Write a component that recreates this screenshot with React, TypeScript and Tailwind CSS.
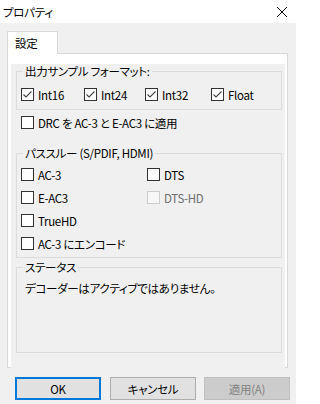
import React from 'react';

function CheckBox({ checked = false, disabled = false }: { checked?: boolean; disabled?: boolean }) {
  return (
    <span
      className={
        disabled
          ? 'flex h-[13px] w-[13px] shrink-0 items-center justify-center border border-[#cccccc] bg-[#f7f7f7]'
          : 'flex h-[13px] w-[13px] shrink-0 items-center justify-center border border-[#333333] bg-white'
      }
    >
      {checked && (
        <svg width="11" height="11" viewBox="0 0 11 11" fill="none">
          <polyline points="1.5,5.5 4,8 9.5,2.5" stroke="#444444" strokeWidth="1.1" />
        </svg>
      )}
    </span>
  );
}

function Check({
  label,
  checked = false,
  disabled = false,
  className = '',
}: {
  label: string;
  checked?: boolean;
  disabled?: boolean;
  className?: string;
}) {
  return (
    <div className={`flex h-[13px] items-center gap-[4px] ${className}`}>
      <CheckBox checked={checked} disabled={disabled} />
      <span className={disabled ? 'whitespace-nowrap text-[#6d6d6d]' : 'whitespace-nowrap'}>{label}</span>
    </div>
  );
}

export default function App() {
  return (
    <div className="flex h-[404px] w-[296px] flex-col bg-[#f0f0f0] font-['Noto_Sans_CJK_JP','Noto_Sans',sans-serif] text-[11.5px] leading-[14px] tracking-[-0.3px] text-black [font-feature-settings:'palt']">
      {/* title bar */}
      <div className="flex h-[23px] items-center justify-between bg-white pl-[3px] pr-[9px]">
        <span>プロパティ</span>
        <svg width="10" height="10" viewBox="0 0 10 10">
          <path d="M0 0 L10 10 M10 0 L0 10" stroke="#000" strokeWidth="1" />
        </svg>
      </div>

      {/* tab */}
      <div className="ml-[7px] mt-[8px] flex">
        <div className="relative z-10 -mb-px flex h-[23px] w-[51px] items-center border border-b-0 border-[#d9d9d9] bg-white pl-[7px]">
          設定
        </div>
      </div>

      {/* tab page */}
      <div className="ml-[7px] h-[315px] w-[281px] border border-[#d9d9d9] bg-white pb-[2px] pl-[3px] pr-[2px] pt-[2px]">
        <div className="h-full bg-[#f0f0f0]">
          <fieldset className="ml-[5px] mt-[8px] w-[266px] border border-[#dcdcdc] p-0">
            <legend className="ml-[6px] px-[2px]">出力サンプル フォーマット:</legend>
            <div className="flex pb-[8px] pl-[4px] pt-[10px]">
              <Check label="Int16" checked className="w-[63px]" />
              <Check label="Int24" checked className="w-[61px]" />
              <Check label="Int32" checked className="w-[66px]" />
              <Check label="Float" checked />
            </div>
          </fieldset>

          <Check label="DRC を AC-3 と E-AC3 に適用" className="ml-[10px] mt-[6px]" />

          <fieldset className="ml-[5px] mt-[17px] w-[266px] border border-[#dcdcdc] p-0">
            <legend className="ml-[6px] px-[2px]">パススルー (S/PDIF, HDMI)</legend>
            <div className="grid grid-cols-[126px_1fr] gap-y-[10px] pb-[7px] pl-[4px] pt-[8px]">
              <Check label="AC-3" />
              <Check label="DTS" />
              <Check label="E-AC3" />
              <Check label="DTS-HD" disabled />
              <Check label="TrueHD" />
              <div />
              <Check label="AC-3 にエンコード" />
            </div>
          </fieldset>

          <fieldset className="ml-[5px] mt-[2px] w-[266px] border border-[#dcdcdc] p-0">
            <legend className="ml-[6px] px-[2px]">ステータス</legend>
            <p className="pb-[57px] pl-[8px] pt-[7px]">デコーダーはアクティブではありません。</p>
          </fieldset>
        </div>
      </div>

      {/* buttons */}
      <div className="mt-[9px] flex">
        <button className="ml-[15px] h-[23px] w-[86px] border-2 border-[#0078d7] bg-[#e1e1e1]">OK</button>
        <button className="ml-[9px] h-[23px] w-[86px] border border-[#adadad] bg-[#e1e1e1]">キャンセル</button>
        <button className="ml-[8px] h-[23px] w-[86px] border border-[#bfbfbf] bg-[#cccccc] text-[#838383]">
          適用(A)
        </button>
      </div>
    </div>
  );
}
